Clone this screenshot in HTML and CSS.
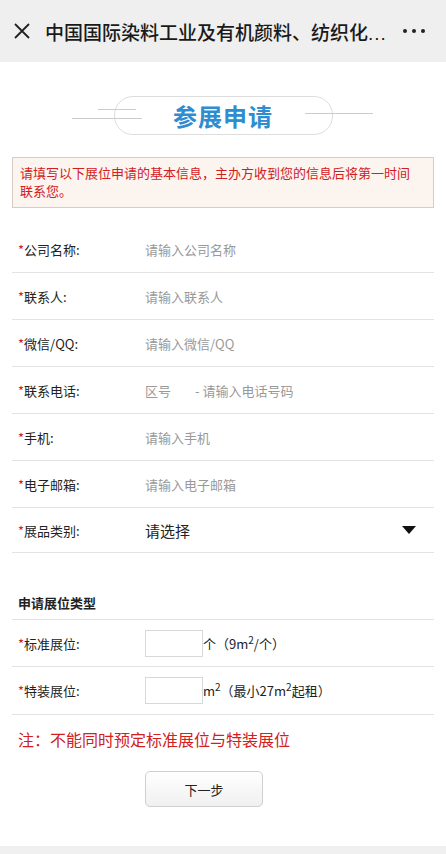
FILE: index.html
```html
<!DOCTYPE html>
<html lang="zh-CN">

<head>
    <meta charset="UTF-8">
    <meta name="viewport" content="width=device-width, initial-scale=1.0">
    <title>参展申请</title>
    <link rel="stylesheet" href="styles.css">
</head>

<body>
    <div class="topbar">
        <svg class="close" width="16" height="16" viewBox="0 0 16 16">
            <path d="M1 1L15 15M15 1L1 15" stroke="#222" stroke-width="1.8" fill="none" />
        </svg>
        <div class="topbar-title">中国国际染料工业及有机颜料、纺织化<span class="dots">...</span></div>
        <div class="more"><span></span><span></span><span></span></div>
    </div>

    <div class="banner">
        <span class="line line-left1"></span>
        <span class="line line-left2"></span>
        <div class="pill">参展申请</div>
        <span class="line line-right"></span>
    </div>

    <div class="notice">请填写以下展位申请的基本信息，主办方收到您的信息后将第一时间联系您。</div>

    <ul class="form">
        <li><label><em>*</em>公司名称:</label><span class="ph">请输入公司名称</span></li>
        <li><label><em>*</em>联系人:</label><span class="ph">请输入联系人</span></li>
        <li><label><em>*</em>微信/QQ:</label><span class="ph">请输入微信/QQ</span></li>
        <li><label><em>*</em>联系电话:</label><span class="ph area">区号</span><span class="ph">- 请输入电话号码</span></li>
        <li><label><em>*</em>手机:</label><span class="ph">请输入手机</span></li>
        <li><label><em>*</em>电子邮箱:</label><span class="ph">请输入电子邮箱</span></li>
        <li class="select"><label><em>*</em>展品类别:</label><span class="choose">请选择</span>
            <svg class="caret" width="14" height="8" viewBox="0 0 14 8">
                <path d="M0 0H14L7 8Z" fill="#111" />
            </svg>
        </li>
    </ul>

    <h4 class="section">申请展位类型</h4>
    <ul class="form booth">
        <li><label><em>*</em>标准展位:</label><span class="box"></span><span class="unit">个（9m<sup>2</sup>/个）</span></li>
        <li><label><em>*</em>特装展位:</label><span class="box"></span><span class="unit">m<sup>2</sup>（最小27m<sup>2</sup>起租）</span></li>
    </ul>

    <p class="warn">注：不能同时预定标准展位与特装展位</p>

    <div class="actions"><button>下一步</button></div>

    <div class="footer"></div>
</body>

</html>
```

FILE: styles.css
```css
/* Basic */
body {
    margin: 0;
    background: #fff;
    color: #222;
    font-family: "Noto Sans CJK SC", "Liberation Sans", sans-serif;
}

ul {
    margin: 0;
    padding: 0;
    list-style: none;
}

/* Top bar */
.topbar {
    height: 62px;
    background: #efefef;
    display: flex;
    align-items: center;
    padding: 0 14px 0 14px;
}

.close {
    flex: none;
    margin-right: 15px;
}

.topbar-title {
    flex: 1;
    font-size: 19px;
    font-weight: 500;
    color: #1a1a1a;
    white-space: nowrap;
    overflow: hidden;
}

.topbar-title .dots {
    font-family: "Liberation Sans", sans-serif;
    letter-spacing: 1px;
}

.more {
    display: flex;
    gap: 5px;
    margin-left: 8px;
    margin-right: 7px;
}

.more span {
    width: 4px;
    height: 4px;
    border-radius: 2px;
    background: #222;
}

/* Banner */
.banner {
    position: relative;
    height: 38px;
    margin: 34px 0 0;
    display: flex;
    justify-content: center;
}

.pill {
    width: 217px;
    height: 37px;
    border: 1px solid #ddd;
    border-radius: 19px;
    text-align: center;
    line-height: 37px;
    font-size: 24px;
    font-weight: 700;
    color: #2f8ccf;
    letter-spacing: 1px;
}

.line {
    position: absolute;
    height: 1px;
    background: #ccc;
}

.line-left1 {
    left: 98px;
    width: 38px;
    top: 13px;
}

.line-left2 {
    left: 72px;
    width: 70px;
    top: 22px;
}

.line-right {
    left: 305px;
    width: 68px;
    top: 17px;
}

/* Notice */
.notice {
    margin: 23px 12px 0;
    padding: 6px 12px 7px 7px;
    background: #fbf4ef;
    border: 1px solid #d6ccc2;
    color: #d2201e;
    font-size: 13px;
    line-height: 18px;
}

/* Form rows */
.form {
    margin: 18px 12px 0;
}

.form li {
    height: 46px;
    border-bottom: 1px solid #e3e3e3;
    display: flex;
    align-items: center;
}

.form label {
    width: 127px;
    padding-left: 6px;
    font-size: 13px;
    color: #222;
}

.form em {
    font-style: normal;
    color: #d2201e;
}

.ph {
    font-size: 13px;
    color: #999;
}

.ph.area {
    width: 50px;
}

.form li.select {
    height: 44px;
}

.choose {
    flex: 1;
    font-size: 15px;
    color: #222;
}

.caret {
    margin-right: 18px;
}

/* Booth type */
.section {
    margin: 41px 12px 0;
    padding: 0 0 0 6px;
    height: 25px;
    line-height: 18px;
    font-size: 13px;
    font-weight: 700;
    border-bottom: 1px solid #e3e3e3;
}

.booth {
    margin-top: 0;
}

.booth li {
    height: 47px;
}

.booth li:first-child {
    height: 46px;
}

.box {
    width: 56px;
    height: 25px;
    border: 1px solid #d8d8d8;
    box-sizing: content-box;
}

.unit {
    font-size: 13px;
    color: #222;
}

.unit sup {
    font-size: 10px;
    line-height: 0;
}

/* Warning and button */
.warn {
    margin: 12px 18px 0;
    font-size: 16px;
    color: #d2201e;
}

.actions {
    margin-top: 20px;
    padding-left: 145px;
}

.actions button {
    width: 118px;
    height: 36px;
    border: 1px solid #cfcfcf;
    border-radius: 5px;
    background: linear-gradient(#fff, #f0f0f0);
    font-size: 13px;
    color: #222;
    font-family: "Noto Sans CJK SC", sans-serif;
}

.footer {
    margin-top: 39px;
    height: 20px;
    background: #f0f0f0;
}
```
